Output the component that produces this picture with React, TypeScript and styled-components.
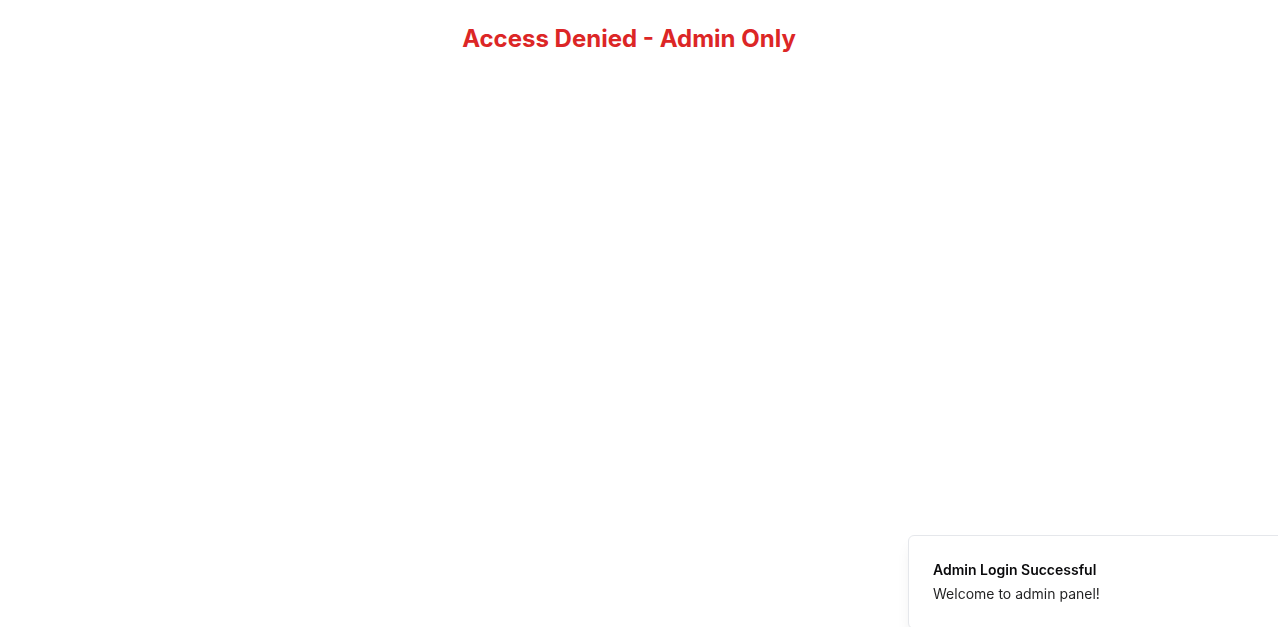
import React from "react";
import styled, { createGlobalStyle } from "styled-components";

const GlobalStyle = createGlobalStyle`
  html, body {
    margin: 0;
    padding: 0;
    background: #ffffff;
    font-family: Inter, "Noto Sans", sans-serif;
    overflow: hidden;
  }
`;

const Page = styled.main`
  width: 1258px;
  min-height: 627px;
  box-sizing: border-box;
  padding-top: 23px;
  display: flex;
  flex-direction: column;
  align-items: center;
`;

const Heading = styled.h1`
  margin: 0;
  font-family: Inter, sans-serif;
  font-size: 24px;
  line-height: 32px;
  font-weight: 700;
  color: #dc2626;
  text-align: center;
`;

const Toast = styled.div`
  position: fixed;
  left: 908px;
  top: 535px;
  width: 420px;
  box-sizing: border-box;
  padding: 24px 32px 24px 24px;
  background: #ffffff;
  border: 1px solid #e5e7eb;
  border-radius: 6px;
  box-shadow: 0 10px 15px -3px rgba(0, 0, 0, 0.08), 0 4px 6px -4px rgba(0, 0, 0, 0.08);
  display: flex;
  flex-direction: column;
  gap: 4px;
  color: #09090b;
`;

const ToastTitle = styled.div`
  font-size: 14px;
  line-height: 20px;
  font-weight: 600;
`;

const ToastDescription = styled.div`
  font-size: 14px;
  line-height: 20px;
  opacity: 0.9;
`;

export default function App() {
  return (
    <>
      <GlobalStyle />
      <Page>
        <Heading>Access Denied - Admin Only</Heading>
      </Page>
      <Toast role="status">
        <ToastTitle>Admin Login Successful</ToastTitle>
        <ToastDescription>Welcome to admin panel!</ToastDescription>
      </Toast>
    </>
  );
}
